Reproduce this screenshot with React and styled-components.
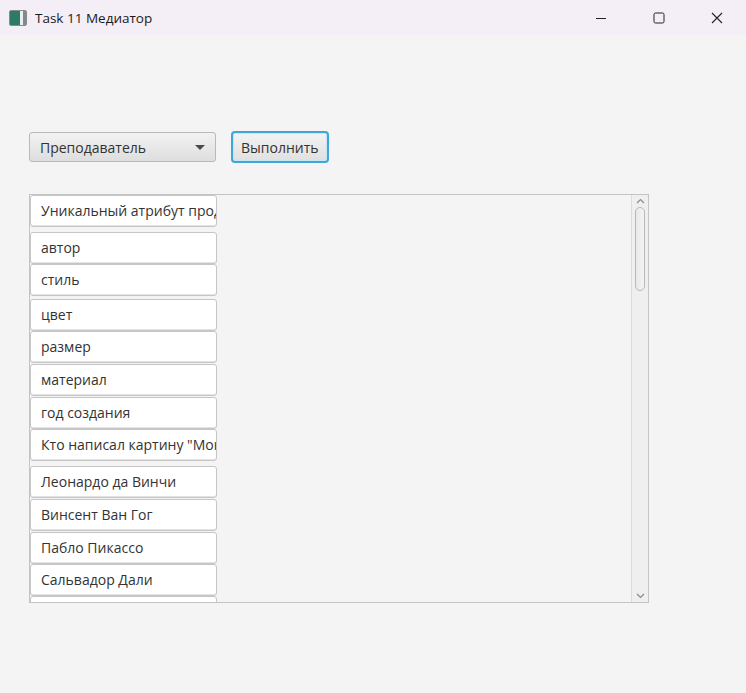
import styled, { createGlobalStyle } from "styled-components";

const GlobalStyle = createGlobalStyle`
  html, body {
    margin: 0;
    padding: 0;
    background: #f4f4f4;
  }
  body {
    font-family: "Open Sans", "Noto Sans", sans-serif;
    color: #333;
  }
`;

const Window = styled.div`
  width: 746px;
  height: 693px;
  display: flex;
  flex-direction: column;
  background: #f4f4f4;
  overflow: hidden;
`;

const TitleBar = styled.div`
  height: 35px;
  display: flex;
  align-items: center;
  background: #f4eef6;
  padding-left: 9px;
`;

const AppIcon = styled.div`
  width: 16px;
  height: 14px;
  border: 1px solid #8a8a8a;
  border-radius: 2px;
  background: linear-gradient(90deg, #2f7a66 0 60%, #e9efee 60% 80%, #7a8f8a 80%);
  margin-right: 8px;
`;

const Title = styled.span`
  font-family: "Open Sans", sans-serif;
  font-size: 13.5px;
  color: #1a1a1a;
  flex: 1;
`;

const Controls = styled.div`
  display: flex;
  height: 100%;
`;

const Control = styled.div`
  width: 58px;
  display: flex;
  align-items: center;
  justify-content: center;
`;

const Body = styled.div`
  flex: 1;
  padding: 96px 0 0 29px;
  display: flex;
  flex-direction: column;
`;

const Toolbar = styled.div`
  display: flex;
  align-items: center;
  gap: 15px;
  height: 32px;
`;

const Combo = styled.div`
  width: 187px;
  height: 30px;
  box-sizing: border-box;
  border: 1px solid #b9b9b9;
  border-radius: 3px;
  background: linear-gradient(#f2f2f2, #dedede);
  display: flex;
  align-items: center;
  justify-content: space-between;
  padding: 0 9px 0 10px;
  font-size: 14px;
  color: #333;
`;

const Arrow = styled.span`
  width: 0;
  height: 0;
  border-left: 5px solid transparent;
  border-right: 5px solid transparent;
  border-top: 5px solid #4a4a4a;
  margin-right: 1px;
`;

const RunButton = styled.button`
  height: 32px;
  box-sizing: border-box;
  padding: 0 8px;
  border: 2px solid #3fa6d7;
  border-radius: 4px;
  background: linear-gradient(#f3f3f3, #e0e0e0);
  box-shadow: inset 0 0 0 1px #c9e6f4;
  font-family: "Open Sans", sans-serif;
  font-size: 14px;
  color: #333;
`;

const ListBox = styled.div`
  margin-top: 31px;
  width: 620px;
  height: 409px;
  box-sizing: border-box;
  border: 1px solid #c4c4c4;
  display: flex;
  overflow: hidden;
  background: #f4f4f4;
`;

const Items = styled.div`
  flex: 1;
  display: flex;
  flex-direction: column;
`;

const Field = styled.div`
  flex: none;
  margin-top: ${(p) => p.$gap}px;
  width: 187px;
  height: 32px;
  box-sizing: border-box;
  border: 1px solid #c6c6c6;
  border-radius: 3px;
  background: #fff;
  box-shadow: inset 0 -1px 0 #e4e4e4;
  display: flex;
  align-items: center;
  padding: 0 0 1px 10px;
  font-size: 14px;
  color: #333;
  white-space: nowrap;
  overflow: hidden;
`;

const ScrollBar = styled.div`
  width: 16px;
  display: flex;
  flex-direction: column;
  align-items: center;
  background: #efefef;
  border-left: 1px solid #dcdcdc;
`;

const ScrollThumb = styled.div`
  width: 10px;
  height: 84px;
  box-sizing: border-box;
  border: 1px solid #b8b8b8;
  border-radius: 5px;
  background: linear-gradient(90deg, #e8e8e8, #f4f4f4);
`;

const ScrollArrow = styled.svg`
  flex: none;
  margin: 3px 0;
`;

const Spacer = styled.div`
  flex: 1;
`;

const items = [
  ["Уникальный атрибут продукта", 0],
  ["автор", 5],
  ["стиль", 0],
  ["цвет", 3],
  ["размер", 0],
  ["материал", 1],
  ["год создания", 1],
  ["Кто написал картину \"Мона Лиза\"?", 0],
  ["Леонардо да Винчи", 5],
  ["Винсент Ван Гог", 1],
  ["Пабло Пикассо", 1],
  ["Сальвадор Дали", 0],
  ["", 0],
];

const App = () => {
  return (
    <Window>
      <GlobalStyle />
      <TitleBar>
        <AppIcon />
        <Title>Task 11 Медиатор</Title>
        <Controls>
          <Control>
            <svg width="12" height="12" viewBox="0 0 12 12">
              <path d="M1 6.5h10" stroke="#222" strokeWidth="1" />
            </svg>
          </Control>
          <Control>
            <svg width="12" height="12" viewBox="0 0 12 12">
              <rect x="1" y="1" width="10" height="10" rx="1.5" fill="none" stroke="#222" strokeWidth="1" />
            </svg>
          </Control>
          <Control>
            <svg width="12" height="12" viewBox="0 0 12 12">
              <path d="M1 1l10 10M11 1L1 11" stroke="#222" strokeWidth="1.1" />
            </svg>
          </Control>
        </Controls>
      </TitleBar>
      <Body>
        <Toolbar>
          <Combo>
            Преподаватель
            <Arrow />
          </Combo>
          <RunButton>Выполнить</RunButton>
        </Toolbar>
        <ListBox>
          <Items>
            {items.map(([text, gap], i) => (
              <Field key={i} $gap={gap}>
                {text}
              </Field>
            ))}
          </Items>
          <ScrollBar>
            <ScrollArrow width="9" height="6" viewBox="0 0 9 6">
              <path d="M1 5l3.5-3.5L8 5" fill="none" stroke="#8a8a8a" strokeWidth="1.2" />
            </ScrollArrow>
            <ScrollThumb />
            <Spacer />
            <ScrollArrow width="9" height="6" viewBox="0 0 9 6">
              <path d="M1 1l3.5 3.5L8 1" fill="none" stroke="#8a8a8a" strokeWidth="1.2" />
            </ScrollArrow>
          </ScrollBar>
        </ListBox>
      </Body>
    </Window>
  );
};

export default App;
